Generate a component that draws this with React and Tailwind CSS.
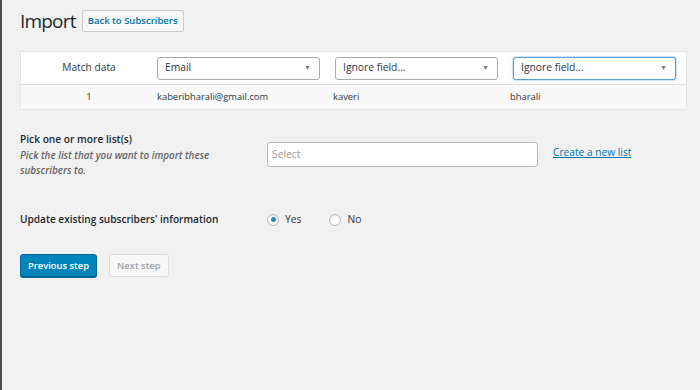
import React from "react";

const font = { fontFamily: '"Open Sans", "Noto Sans", sans-serif' };

function Caret() {
  return <span className="text-[7px] text-[#777]">▼</span>;
}

function FieldSelect({ label, focused }) {
  return (
    <div
      className={`flex h-[23px] w-[163px] items-center justify-between rounded-[3px] border bg-white pl-[7px] pr-[8px] text-[10.3px] text-[#32373c] ${
        focused
          ? "border-[#5b9dd9] shadow-[0_0_2px_rgba(30,140,190,0.8)]"
          : "border-[#aaa]"
      }`}
    >
      <span>{label}</span>
      <Caret />
    </div>
  );
}

function Radio({ checked, label }) {
  return (
    <label className="flex items-center gap-[6px] text-[10.3px] text-[#32373c]">
      <span className="flex h-[12px] w-[12px] items-center justify-center rounded-full border border-[#b4b9be] bg-white shadow-[inset_0_1px_2px_rgba(0,0,0,0.1)]">
        {checked && <span className="h-[5px] w-[5px] rounded-full bg-[#1e8cbe]" />}
      </span>
      {label}
    </label>
  );
}

export default function App() {
  return (
    <div
      className="flex h-[390px] w-[700px] overflow-hidden bg-[#f1f1f1] text-[#23282d]"
      style={font}
    >
      <div className="w-[2px] shrink-0 bg-[#464b54]" />

      <div className="flex-1 pl-[18px] pr-[13px]">
        {/* heading */}
        <div className="flex items-center gap-[6px] pt-[9px]">
          <h1 className="text-[19px] leading-[24px] tracking-[-0.8px] text-[#23282d]">
            Import
          </h1>
          <button className="h-[22px] rounded-[2px] border border-[#ccc] bg-[#f7f7f7] px-[5px] text-[9.5px] font-semibold text-[#0073aa]">
            Back to Subscribers
          </button>
        </div>

        {/* mapping table */}
        <div className="mt-[18px] border border-[#e5e5e5] bg-white">
          <div className="flex h-[33px] items-center border-b border-[#e1e1e1]">
            <div className="w-[136px] text-center text-[10.2px] text-[#32373c]">
              Match data
            </div>
            <div className="flex gap-[15px]">
              <FieldSelect label="Email" />
              <FieldSelect label="Ignore field..." />
              <FieldSelect label="Ignore field..." focused />
            </div>
          </div>
          <div className="flex h-[24px] items-center bg-[#f9f9f9] text-[9.4px] text-[#32373c]">
            <div className="w-[136px] text-center">1</div>
            <div className="w-[176px]">kaberibharali@gmail.com</div>
            <div className="w-[177px]">kaveri</div>
            <div>bharali</div>
          </div>
        </div>

        {/* list picker */}
        <div className="mt-[22px] flex items-start">
          <div className="w-[247px]">
            <div className="text-[10.2px] font-semibold leading-[14px]">
              Pick one or more list(s)
            </div>
            <div className="mt-[2px] text-[9.9px] font-semibold italic leading-[15px] text-[#666]">
              Pick the list that you want to import these
              <br />
              subscribers to.
            </div>
          </div>
          <div className="mt-[10px] flex h-[25px] w-[271px] items-center rounded-[3px] border border-[#bbb] bg-white px-[4px] text-[10.3px] text-[#999]">
            Select
          </div>
          <a className="ml-[15px] mt-[13px] text-[10.2px] text-[#0073aa] underline">
            Create a new list
          </a>
        </div>

        {/* update option */}
        <div className="mt-[34px] flex items-center">
          <div className="w-[247px] text-[10.1px] font-semibold">
            Update existing subscribers' information
          </div>
          <div className="flex items-center gap-[28px]">
            <Radio checked label="Yes" />
            <Radio label="No" />
          </div>
        </div>

        {/* steps */}
        <div className="mt-[27px] flex gap-[12px]">
          <button className="h-[23px] rounded-[3px] border border-[#006799] bg-[#0085ba] px-[7px] text-[9.4px] font-semibold text-white shadow-[0_1px_0_#006799]">
            Previous step
          </button>
          <button className="h-[23px] rounded-[3px] border border-[#ddd] bg-[#f7f7f7] px-[7px] text-[9.4px] font-semibold text-[#a0a5aa]">
            Next step
          </button>
        </div>
      </div>
    </div>
  );
}
